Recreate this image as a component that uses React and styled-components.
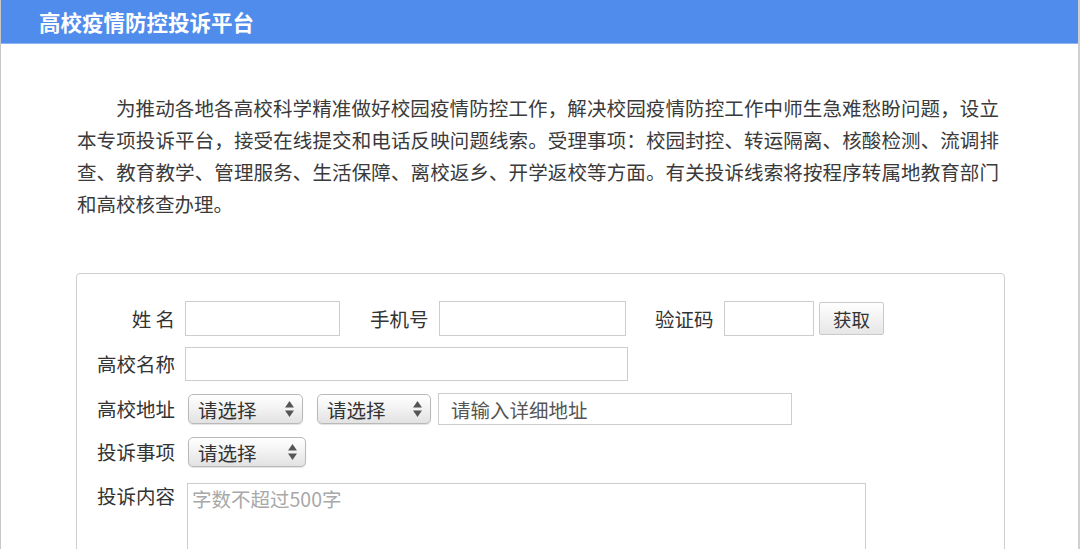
import React from 'react'
import styled, { createGlobalStyle } from 'styled-components'

const GlobalStyle = createGlobalStyle`
    html, body {
        margin: 0;
        padding: 0;
        background: #fff;
    }
    * {
        box-sizing: border-box;
    }
    body {
        font-family: "Noto Sans CJK SC", "Noto Sans", sans-serif;
        color: #333;
    }
`

//#region styled components

const Page = styled.div`
    min-height: 549px;
    border-left: 1px solid #c8c8c8;
    border-right: 2px solid #d0d0d0;
    padding-bottom: 40px;
`

const Header = styled.header`
    height: 44px;
    background-color: #508ceb;
    border-bottom: 1px solid #8cb4f2;
    display: flex;
    align-items: center;
    padding-left: 38px;
    color: #fff;
    font-size: 21.5px;
    font-weight: 700;
`

const Intro = styled.p`
    margin: 48px 79px 0 76px;
    font-size: 19.5px;
    line-height: 32px;
    text-indent: 2em;
    text-align: justify;
    color: #3a3a3a;
`

const FormBox = styled.div`
    margin: 53px 0 0 75px;
    width: 929px;
    min-height: 320px;
    border: 1px solid #cfcfcf;
    border-radius: 4px;
    padding: 27px 0 0 8px;
    display: flex;
    flex-direction: column;
    gap: 11px;
`

const Row = styled.div`
    display: flex;
    align-items: ${p => p.$top ? 'flex-start' : 'center'};
    margin-top: ${p => p.$offset || 0}px;
`

const Label = styled.label`
    width: ${p => p.$width || 90}px;
    margin-left: ${p => p.$gap || 0}px;
    margin-right: ${p => p.$after || 10}px;
    text-align: right;
    font-size: 19.5px;
    line-height: 24px;
    color: #333;
    white-space: nowrap;
    padding-top: ${p => p.$top ? 1 : 0}px;
`

const TextInput = styled.input`
    width: ${p => p.$width}px;
    height: ${p => p.$height || 35}px;
    margin-left: ${p => p.$gap || 0}px;
    border: 1px solid #cdcdcd;
    border-radius: 0;
    padding: 0 12px;
    font-family: inherit;
    font-size: 19.5px;
    color: #333;
    outline: none;

    &::placeholder {
        color: #555;
    }
`

const FetchButton = styled.button`
    margin-left: 5px;
    width: 65px;
    height: 33px;
    border: 1px solid #cacaca;
    border-radius: 2px;
    background: linear-gradient(#ffffff, #e6e6e6);
    font-family: inherit;
    font-size: 18.5px;
    color: #333;
    padding: 0;
`

const SelectWrap = styled.div`
    position: relative;
    margin-left: ${p => p.$gap || 0}px;
    width: ${p => p.$width}px;
    height: 30px;
`

const Select = styled.select`
    appearance: none;
    -webkit-appearance: none;
    width: 100%;
    height: 100%;
    border: 1px solid #b9b9b9;
    border-radius: 5px;
    background: linear-gradient(#ffffff 0%, #f3f3f3 45%, #e2e2e2 100%);
    box-shadow: 0 1px 1px rgba(0, 0, 0, 0.12);
    padding: 0 0 0 9px;
    font-family: inherit;
    font-size: 19.5px;
    color: #333;
    outline: none;
`

const Arrows = styled.svg`
    position: absolute;
    right: 9px;
    top: 7px;
    pointer-events: none;
`

const TextArea = styled.textarea`
    width: 679px;
    height: 110px;
    margin-left: 2px;
    border: 1px solid #cdcdcd;
    border-radius: 0;
    padding: 3px 4px;
    font-family: inherit;
    font-size: 19.5px;
    line-height: 24px;
    resize: none;
    outline: none;

    &::placeholder {
        color: #a8a8a8;
    }
`

//#endregion

function Dropdown({ width, gap }) {
    return (
        <SelectWrap $width={width} $gap={gap}>
            <Select defaultValue="">
                <option value="">请选择</option>
            </Select>
            <Arrows width="9" height="16" viewBox="0 0 9 16">
                <path d="M4.5 0 L9 6.5 L0 6.5 Z" fill="#555" />
                <path d="M4.5 16 L9 9.5 L0 9.5 Z" fill="#555" />
            </Arrows>
        </SelectWrap>
    )
}

function App() {
    return (
        <>
            <GlobalStyle />
            <Page>
                <Header>高校疫情防控投诉平台</Header>

                <Intro>
                    为推动各地各高校科学精准做好校园疫情防控工作，解决校园疫情防控工作中师生急难愁盼问题，设立本专项投诉平台，接受在线提交和电话反映问题线索。受理事项：校园封控、转运隔离、核酸检测、流调排查、教育教学、管理服务、生活保障、离校返乡、开学返校等方面。有关投诉线索将按程序转属地教育部门和高校核查办理。
                </Intro>

                <FormBox>
                    <Row>
                        <Label>姓 名</Label>
                        <TextInput $width={155} />
                        <Label $width={57} $gap={30} $after={12}>手机号</Label>
                        <TextInput $width={187} />
                        <Label $width={58} $gap={29} $after={11}>验证码</Label>
                        <TextInput $width={90} />
                        <FetchButton>获取</FetchButton>
                    </Row>

                    <Row>
                        <Label>高校名称</Label>
                        <TextInput $width={443} $height={34} />
                    </Row>

                    <Row $offset={1}>
                        <Label>高校地址</Label>
                        <Dropdown width={115} gap={3} />
                        <Dropdown width={114} gap={14} />
                        <TextInput $width={354} $height={32} $gap={7} placeholder="请输入详细地址" />
                    </Row>

                    <Row $offset={1}>
                        <Label>投诉事项</Label>
                        <Dropdown width={118} gap={3} />
                    </Row>

                    <Row $top $offset={5}>
                        <Label $top>投诉内容</Label>
                        <TextArea placeholder="字数不超过500字" />
                    </Row>
                </FormBox>
            </Page>
        </>
    )
}

export default App
